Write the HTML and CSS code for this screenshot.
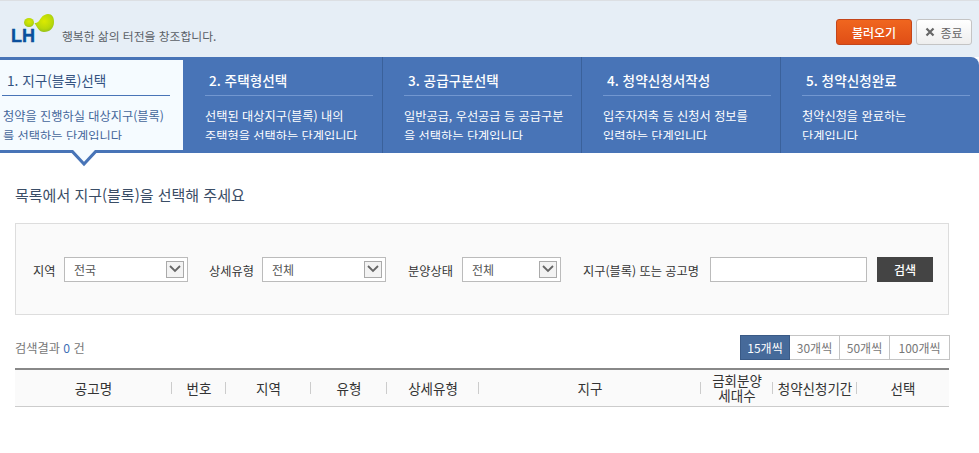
FILE: index.html
```html
<!DOCTYPE html>
<html lang="ko">
<head>
<meta charset="utf-8">
<title>청약신청</title>
<link rel="stylesheet" href="styles.css">
</head>
<body>
<header class="top">
  <div class="brand">
    <div class="logo">
      <svg class="logo-mark" width="32" height="20" viewBox="0 0 32 20">
        <defs>
          <radialGradient id="g" cx="50%" cy="40%" r="65%">
            <stop offset="0" stop-color="#dcea00"/>
            <stop offset="0.65" stop-color="#b8d80a"/>
            <stop offset="1" stop-color="#8dbb1e"/>
          </radialGradient>
        </defs>
        <ellipse cx="5" cy="8.5" rx="5" ry="4.5" fill="url(#g)"/>
        <path d="M10.5 9 C14 9 15 7 17 4 C19 1 22 0 24 0 C28 0 30 3 30 8 C30 14 26 18 20 18 C15 18 13 13 10.5 9Z" fill="url(#g)"/>
      </svg>
      <span class="logo-text">LH</span>
    </div>
    <span class="slogan">행복한 삶의 터전을 창조합니다.</span>
  </div>
  <div class="top-actions">
    <button class="btn-load">불러오기</button>
    <button class="btn-close"><svg width="10" height="10" viewBox="0 0 10 10"><path d="M1.5 1.5 8.5 8.5M8.5 1.5 1.5 8.5" stroke="#666" stroke-width="2.2"/></svg>종료</button>
  </div>
</header>

<nav class="steps">
  <div class="step active">
    <h2>1. 지구(블록)선택</h2>
    <p>청약을 진행하실 대상지구(블록)<br>를 선택하는 단계입니다</p>
    <svg class="pointer" width="28" height="17" viewBox="0 0 28 17"><path d="M1 0 14 14 27 0" fill="#f5fbff" stroke="#4874b7" stroke-width="3"/></svg>
  </div>
  <div class="step second">
    <h2>2. 주택형선택</h2>
    <p>선택된 대상지구(블록) 내의<br>주택형을 선택하는 단계입니다</p>
  </div>
  <div class="step">
    <h2>3. 공급구분선택</h2>
    <p>일반공급, 우선공급 등 공급구분<br>을 선택하는 단계입니다</p>
  </div>
  <div class="step">
    <h2>4. 청약신청서작성</h2>
    <p>입주자저축 등 신청서 정보를<br>입력하는 단계입니다</p>
  </div>
  <div class="step last">
    <h2>5. 청약신청완료</h2>
    <p>청약신청을 완료하는<br>단계입니다</p>
  </div>
</nav>

<main class="content">
  <h1 class="title">목록에서 지구(블록)을 선택해 주세요</h1>

  <form class="filter">
    <label class="f-label f-region">지역</label>
    <div class="select s-region"><span>전국</span><i class="arrow"><svg width="12" height="8" viewBox="0 0 12 8"><path d="M1 1 6 6 11 1" fill="none" stroke="#666" stroke-width="1.8"/></svg></i></div>
    <label class="f-label f-type">상세유형</label>
    <div class="select s-type"><span>전체</span><i class="arrow"><svg width="12" height="8" viewBox="0 0 12 8"><path d="M1 1 6 6 11 1" fill="none" stroke="#666" stroke-width="1.8"/></svg></i></div>
    <label class="f-label f-state">분양상태</label>
    <div class="select s-state"><span>전체</span><i class="arrow"><svg width="12" height="8" viewBox="0 0 12 8"><path d="M1 1 6 6 11 1" fill="none" stroke="#666" stroke-width="1.8"/></svg></i></div>
    <label class="f-label f-name">지구(블록) 또는 공고명</label>
    <input class="f-input" type="text">
    <button class="f-btn" type="button">검색</button>
  </form>

  <div class="result-bar">
    <span class="count">검색결과 <b>0</b> 건</span>
    <div class="pager">
      <a class="on">15개씩</a><a>30개씩</a><a>50개씩</a><a class="wide">100개씩</a>
    </div>
  </div>

  <div class="thead">
    <div>공고명</div>
    <div>번호</div>
    <div>지역</div>
    <div>유형</div>
    <div>상세유형</div>
    <div>지구</div>
    <div class="two">금회분양<br>세대수</div>
    <div>청약신청기간</div>
    <div>선택</div>
  </div>
</main>
</body>
</html>
```

FILE: styles.css
```css
* { box-sizing: border-box; }
html, body { margin: 0; padding: 0; }
body {
  width: 979px;
  height: 453px;
  overflow: hidden;
  background: #fff;
  font-family: "Noto Sans CJK KR", "Noto Sans", sans-serif;
  font-size: 12px;
  color: #333;
}

.top {
  height: 57px;
  background: #e6eef6;
  border-top: 1px solid #dcdfe3;
  display: flex;
  justify-content: space-between;
  padding: 0 7px 0 12px;
}
.brand { display: flex; align-items: flex-start; padding-top: 12px; }
.logo { width: 50px; height: 32px; position: relative; }
.logo-mark { position: absolute; left: 12px; top: 1px; }
.logo-text {
  position: absolute;
  left: -1px;
  top: 11px;
  font: bold 18px/24px "Liberation Sans", sans-serif;
  color: #0b4f9c;
  -webkit-text-stroke: 0.4px #0b4f9c;
}
.slogan { font-size: 11.8px; line-height: 18px; color: #5a6066; margin-top: 14px; }
.top-actions { display: flex; gap: 4px; padding-top: 18px; }
.top-actions button {
  height: 26px;
  font-family: inherit;
  font-size: 12px;
  padding: 0;
  border-radius: 3px;
  cursor: pointer;
}
.btn-load {
  width: 76px;
  color: #fff;
  font-weight: 500;
  background: linear-gradient(#f0661f, #e04e16);
  border: 1px solid #c4451a;
}
.btn-close {
  width: 56px;
  color: #666;
  background: linear-gradient(#fff, #eee);
  border: 1px solid #c4c4c4;
  display: flex;
  align-items: center;
  justify-content: center;
  gap: 5px;
}

.steps {
  height: 96px;
  background: #4874b7;
  border-top-right-radius: 8px;
  display: flex;
}
.step {
  width: 199px;
  padding: 13px 0 0 21px;
  border-right: 1px solid #3a619b;
  color: #fff;
  position: relative;
}
.step.second { width: 200px; padding-left: 22px; }
.step.last { flex: 1; border-right: 0; }
.step h2 {
  margin: 0;
  width: 168px;
  height: 26px;
  padding-left: 4px;
  font-size: 13.6px;
  line-height: 20px;
  font-weight: 500;
  border-bottom: 1px solid #7297d0;
}
.step p {
  margin: 10px 0 0;
  width: 172px;
  height: 34px;
  overflow: hidden;
  font-size: 12.2px;
  line-height: 20px;
}
.step.active {
  width: 183px;
  margin-top: 3px;
  margin-bottom: 3px;
  padding: 10px 0 0 2px;
  background: #f5fbff;
  color: #44659a;
  border-right: 0;
}
.step.active h2 {
  border-bottom-color: #4874b7;
  padding-left: 5px;
  color: #33527f;
  font-weight: 400;
}
.step.active p { width: 178px; margin-left: 1px; }
.pointer { position: absolute; left: 70px; top: 90px; }

.content { padding: 0 30px 0 15px; }
.title {
  margin: 30px 0 0;
  font-size: 15px;
  line-height: 24px;
  font-weight: 400;
  color: #3a4d66;
}
.filter {
  margin-top: 16px;
  width: 934px;
  height: 92px;
  background: #fafafa;
  border: 1px solid #ddd;
  display: flex;
  align-items: center;
  padding-left: 17px;
}
.f-label { font-size: 12.2px; line-height: 22px; padding-top: 3px; color: #333; white-space: nowrap; }
.f-region { width: 31px; }
.f-type { width: 53px; margin-left: 21px; }
.f-state { width: 54px; margin-left: 22px; }
.f-name { width: 127px; margin-left: 22px; }
.select {
  height: 25px;
  background: #fff;
  border: 1px solid #bbb;
  display: flex;
  align-items: center;
  justify-content: space-between;
  padding: 0 3px 0 9px;
  color: #555;
}
.select span { line-height: 20px; padding-top: 2px; }
.s-region, .s-type { width: 124px; }
.s-state { width: 99px; }
.arrow {
  width: 18px;
  height: 17px;
  background: #f3f3f3;
  border: 1px solid #aaa;
  display: flex;
  align-items: center;
  justify-content: center;
}
.f-input { width: 157px; height: 25px; border: 1px solid #bbb; background: #fff; padding: 0; }
.f-btn {
  width: 56px;
  height: 25px;
  margin-left: 10px;
  border: 0;
  padding: 0;
  background: #444;
  color: #fff;
  font-family: inherit;
  font-size: 12px;
  font-weight: 500;
}

.result-bar {
  margin-top: 20px;
  height: 25px;
  display: flex;
  justify-content: space-between;
  align-items: center;
}
.count { color: #777; font-size: 12.2px; }
.count b { font-weight: 400; color: #3f6fb5; }
.pager { display: flex; margin-right: -1px; }
.pager a {
  width: 50px;
  height: 25px;
  line-height: 23px;
  text-align: center;
  border: 1px solid #c4c4c4;
  border-left-width: 0;
  color: #777;
  font-size: 12px;
}
.pager a.wide { width: 60px; }
.pager a.on { background: #466a9a; border: 1px solid #3a5a86; color: #fff; }

.thead {
  margin-top: 8px;
  width: 934px;
  height: 39px;
  background: #fafafa;
  border-top: 2px solid #888;
  border-bottom: 1px solid #ccc;
  display: grid;
  grid-template-columns: 157px 54px 85px 76px 92px 222px 72px 84px 92px;
  align-items: center;
  font-size: 13.5px;
  color: #333;
  text-align: center;
}
.thead div { position: relative; line-height: 15px; }
.thead div + div::before {
  content: "";
  position: absolute;
  left: -1px;
  top: 50%;
  height: 12px;
  margin-top: -6px;
  border-left: 1px solid #ccc;
}
```
